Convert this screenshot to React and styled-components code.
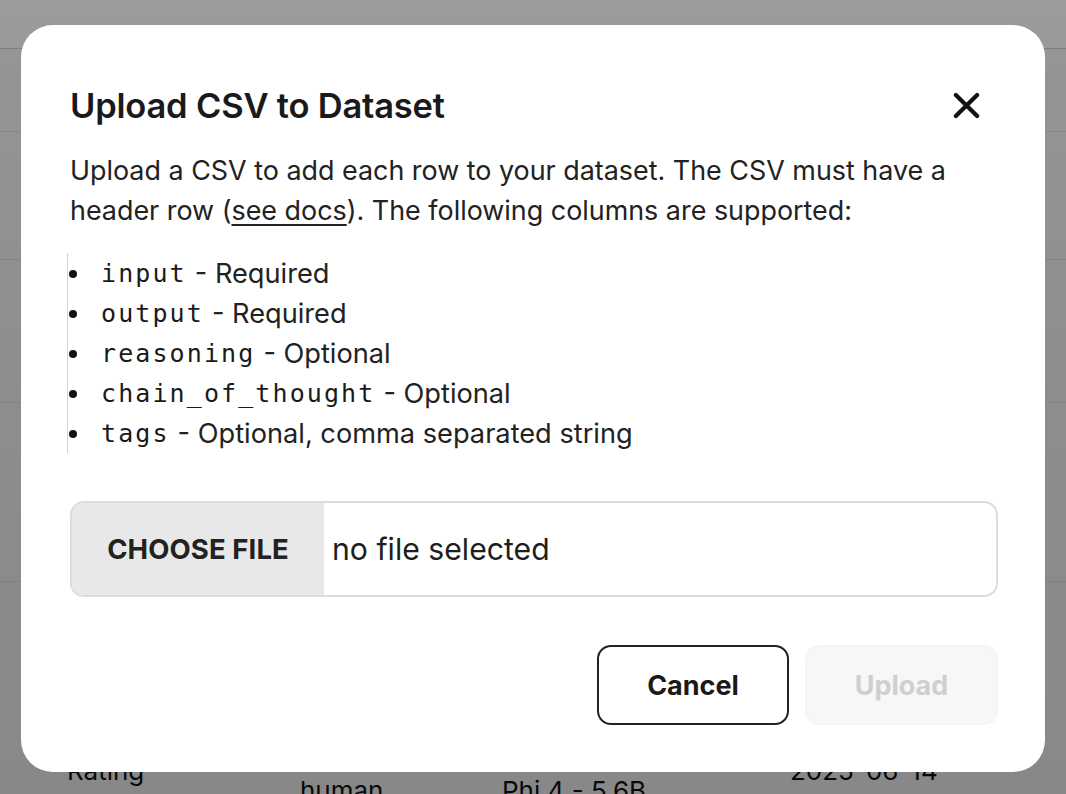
import React from 'react'
import styled, { createGlobalStyle } from 'styled-components'

const Global = createGlobalStyle`
  html, body { margin: 0; padding: 0; }
  body {
    width: 1066px;
    height: 794px;
    overflow: hidden;
    font-family: Inter, "Noto Sans", "Liberation Sans", sans-serif;
    color: #1c1c1c;
    background: #fff;
  }
`

const Page = styled.div`
  width: 1066px;
  height: 794px;
  background: #f4f4f4;
  overflow: hidden;
`

const TopBar = styled.div`
  height: 48px;
  background: #fafafa;
  border-bottom: 1px solid #cfcfcf;
`

const Row = styled.div`
  height: ${p => p.h}px;
  border-bottom: 1px solid #dedede;
  display: flex;
  align-items: flex-start;
  font-size: 26px;
  line-height: 30px;
  color: #111;
  background: #f2f2f2;
`

const Cell = styled.div`
  width: ${p => p.w}px;
  padding-left: ${p => p.pl || 0}px;
  padding-top: ${p => p.pt || 0}px;
  box-sizing: border-box;
  white-space: nowrap;
`

const Overlay = styled.div`
  position: fixed;
  inset: 0;
  background: linear-gradient(180deg, rgba(0,0,0,0.38) 0%, rgba(0,0,0,0.41) 45%, rgba(0,0,0,0.44) 100%);
  display: flex;
  justify-content: center;
  align-items: flex-start;
  padding-top: 25px;
`

const Modal = styled.div`
  width: 1024px;
  height: 747px;
  box-sizing: border-box;
  background: #fff;
  border-radius: 32px;
  padding: 62px 48px 0 49px;
  display: flex;
  flex-direction: column;
`

const Header = styled.div`
  display: flex;
  align-items: center;
  justify-content: space-between;
  height: 36px;
`

const Title = styled.h2`
  margin: 0;
  font-size: 34.5px;
  font-weight: 600;
  letter-spacing: -0.2px;
  color: #1a1a1a;
`

const CloseButton = styled.button`
  border: none;
  background: none;
  padding: 0;
  margin-right: 16px;
  width: 30px;
  height: 30px;
  display: flex;
  align-items: center;
  justify-content: center;
  cursor: pointer;
`

const Text = styled.p`
  margin: 27px 0 0;
  font-size: 26.9px;
  line-height: 40px;
  color: #222;
  width: 910px;
`

const DocsLink = styled.a`
  color: inherit;
  text-decoration: underline;
  text-underline-offset: 4px;
  text-decoration-thickness: 1.5px;
`

const List = styled.ul`
  margin: 23px 0 0 -3px;
  padding: 0;
  list-style: none;
  border-left: 1px solid #c9d5ea;
`

const Item = styled.li`
  display: flex;
  align-items: center;
  height: 40px;
  font-size: 27.2px;
  color: #222;
  &::before {
    content: '';
    width: 8px;
    height: 8px;
    border-radius: 50%;
    background: #111;
    margin: 2px 24px 0 1px;
    flex: none;
  }
`

const Code = styled.code`
  font-family: "DejaVu Sans Mono", "Liberation Mono", monospace;
  font-size: 25px;
  letter-spacing: 2.1px;
  margin-right: 8px;
  color: #1a1a1a;
`

const FileBox = styled.label`
  margin-top: 48px;
  height: 96px;
  box-sizing: border-box;
  border: 2px solid #dcdcdc;
  border-radius: 14px;
  overflow: hidden;
  display: flex;
  align-items: stretch;
  width: 928px;
  flex: none;
`

const FileButton = styled.span`
  width: 252px;
  background: #e8e8e8;
  display: flex;
  align-items: center;
  justify-content: center;
  font-size: 27.5px;
  font-weight: 700;
  color: #222;
  letter-spacing: 0.1px;
`

const FileName = styled.span`
  display: flex;
  align-items: center;
  padding-left: 8px;
  font-size: 30.2px;
  color: #1e1e1e;
`

const Footer = styled.div`
  margin-top: 48px;
  display: flex;
  justify-content: flex-end;
  gap: 16px;
  margin-right: -1px;
`

const Button = styled.button`
  width: ${p => (p.primary ? 193 : 192)}px;
  height: 80px;
  box-sizing: border-box;
  border-radius: 14px;
  font-family: inherit;
  font-size: 27px;
  font-weight: 700;
  border: 2px solid ${p => (p.primary ? '#f5f5f5' : '#222')};
  background: ${p => (p.primary ? '#f7f7f7' : '#fff')};
  color: ${p => (p.primary ? '#cfcfcf' : '#1a1a1a')};
`

const rows = [82, 127, 142, 178]

export default function App() {
  return (
    <>
      <Global />
      <Page>
        <TopBar />
        {rows.map((h, i) => (
          <Row key={i} h={h} />
        ))}
        <Row h={240}>
          <Cell w={240} pl={67} pt={174}>Rating</Cell>
          <Cell w={200} pl={60} pt={194}>human</Cell>
          <Cell w={290} pl={62} pt={194}>Phi 4 - 5.6B</Cell>
          <Cell w={300} pl={60} pt={174}>2025-06-14</Cell>
        </Row>
      </Page>
      <Overlay>
        <Modal>
          <Header>
            <Title>Upload CSV to Dataset</Title>
            <CloseButton aria-label="Close">
              <svg width="27" height="27" viewBox="0 0 28 28">
                <path d="M3 3 L25 25 M25 3 L3 25" stroke="#111" strokeWidth="4.4" strokeLinecap="round" />
              </svg>
            </CloseButton>
          </Header>
          <Text>
            Upload a CSV to add each row to your dataset. The CSV must have a header row (
            <DocsLink href="#">see docs</DocsLink>). The following columns are supported:
          </Text>
          <List>
            <Item><Code>input</Code>- Required</Item>
            <Item><Code>output</Code>- Required</Item>
            <Item><Code>reasoning</Code>- Optional</Item>
            <Item><Code>chain_of_thought</Code>- Optional</Item>
            <Item><Code>tags</Code>- Optional, comma separated string</Item>
          </List>
          <FileBox>
            <FileButton>CHOOSE FILE</FileButton>
            <FileName>no file selected</FileName>
          </FileBox>
          <Footer>
            <Button>Cancel</Button>
            <Button primary disabled>Upload</Button>
          </Footer>
        </Modal>
      </Overlay>
    </>
  )
}
